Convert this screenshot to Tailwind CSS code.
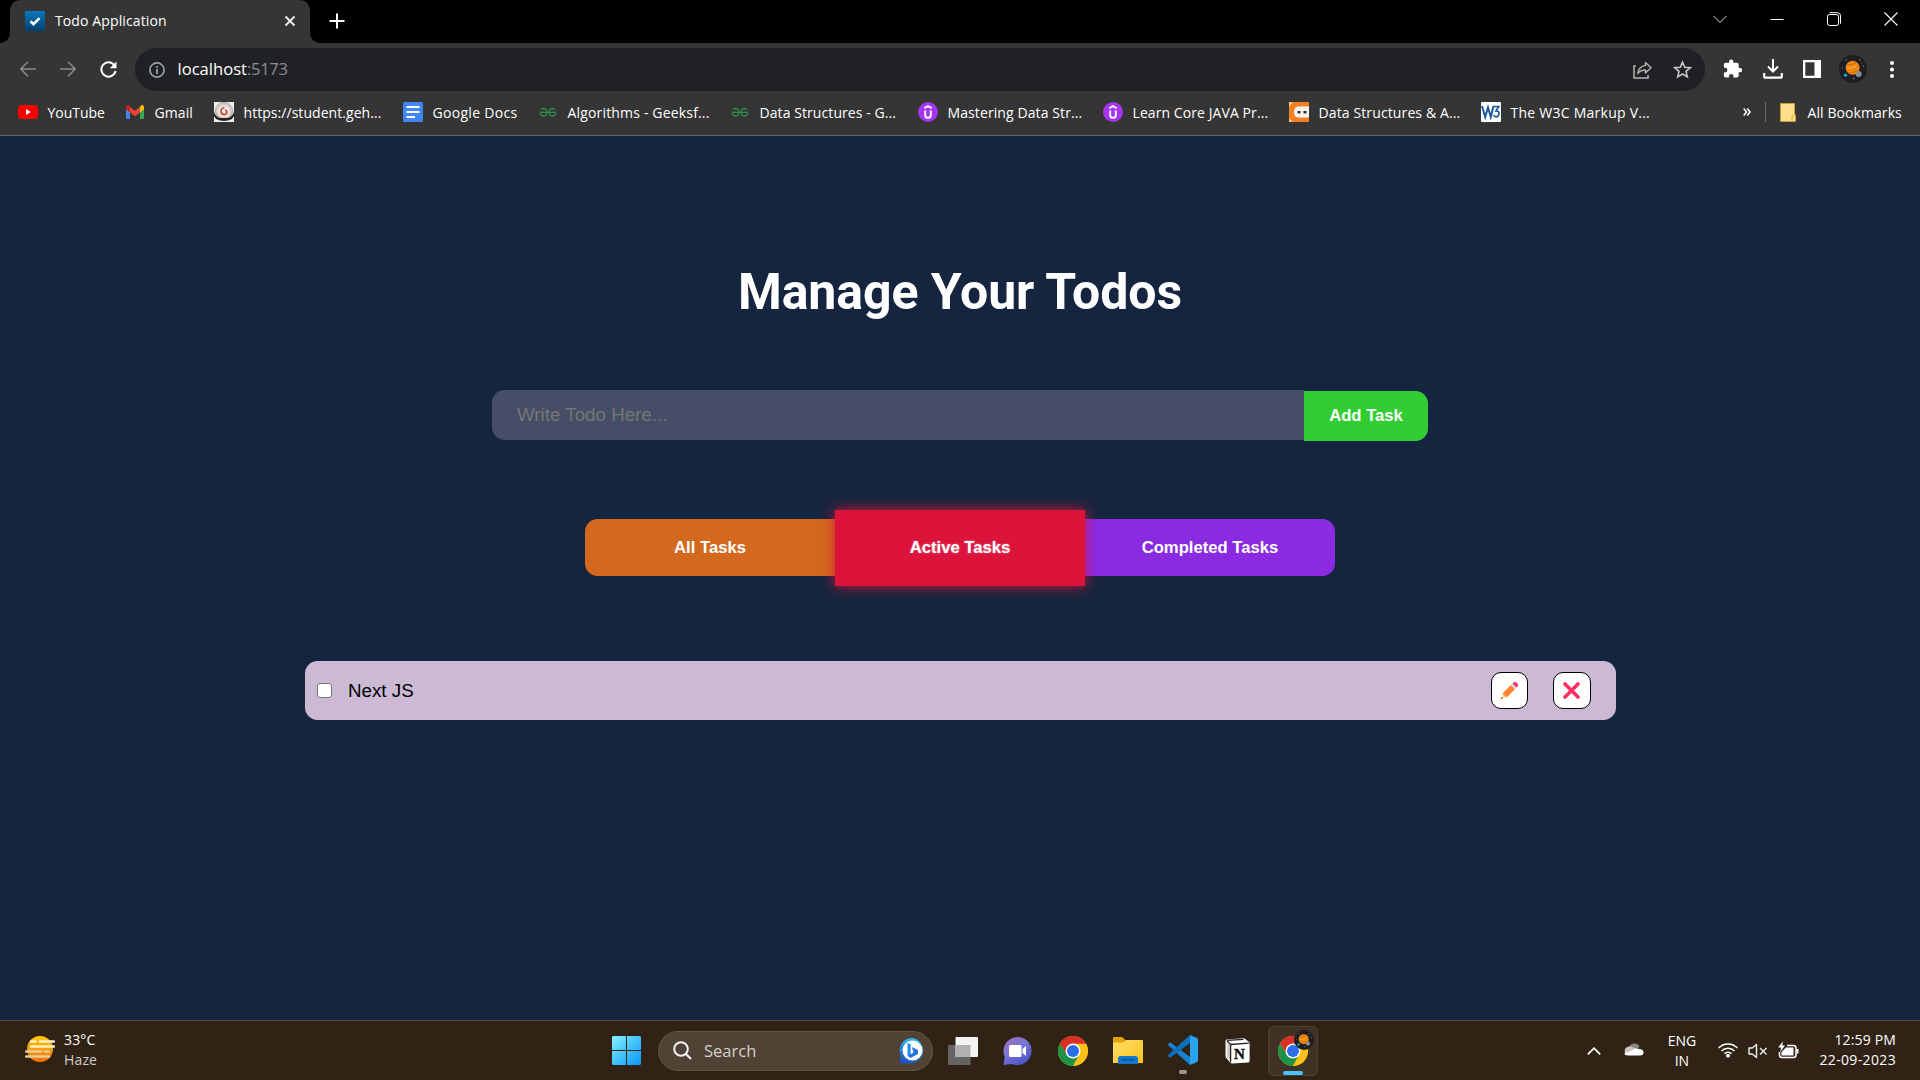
<!DOCTYPE html>
<html lang="en">
<head>
<meta charset="utf-8">
<title>Todo Application</title>
<script src="https://cdn.jsdelivr.net/npm/@tailwindcss/browser@4"></script>
</head>
<body class="w-[1920px] h-[1080px] overflow-hidden flex flex-col bg-[#16253f] text-white text-[14px] font-['Open_Sans','Noto_Sans',sans-serif]">

<svg class="hidden">
  <symbol id="chrome" viewBox="0 0 48 48">
    <circle cx="24" cy="24" r="24" fill="#fbc116"/>
    <path d="M24 24 44.8 12A24 24 0 0 0 3.2 12L13.6 30z" fill="#d93025"/>
    <path d="M24 13H45.3L44.8 12H24z" fill="#d93025"/>
    <path d="M3.2 12A24 24 0 0 0 24 48L33.8 30.5 24 24 13.8 29.5z" fill="#1e9245"/>
    <path d="M24 12.5H45A24 24 0 0 1 24 48L34.2 30z" fill="#fbc116"/>
    <circle cx="24" cy="24" r="12" fill="#fff"/>
    <circle cx="24" cy="24" r="9.6" fill="#2a6fe8"/>
  </symbol>
  <symbol id="planet" viewBox="0 0 28 28">
    <circle cx="14" cy="14" r="14" fill="#1d1e24"/>
    <circle cx="13.6" cy="12.8" r="7" fill="#f0860c"/>
    <path d="M8.500 9.500c3 .6 6-.4 8.500-2.200M9.500 17.700c3 .5 6-.3 8.500-2" stroke="#d0660f" stroke-width="1" fill="none"/>
    <path d="M8 13c3 .4 6-.2 9-1.600" stroke="#ffb54a" stroke-width="1" fill="none"/>
    <circle cx="19.600" cy="19" r="3" fill="#8b8f94"/>
    <circle cx="6.500" cy="20.200" r="1.800" fill="#19a3b5"/>
    <g fill="#8a8c92"><circle cx="7" cy="5" r=".7"/><circle cx="21" cy="5" r=".7"/><circle cx="24.500" cy="11" r=".7"/><circle cx="3.500" cy="13" r=".6"/><circle cx="14.500" cy="23.500" r=".8"/><circle cx="22.500" cy="8" r=".5"/></g>
  </symbol>
  <symbol id="udemy" viewBox="0 0 20 20">
    <circle cx="10" cy="10" r="10" fill="#a435f0"/>
    <path d="M6.300 6.200 10 4l3.700 2.200" stroke="#fff" stroke-width="1.700" fill="none"/>
    <path d="M7.200 8.500v4.700q0 2.600 2.800 2.600t2.800-2.600V8.500" stroke="#fff" stroke-width="1.900" fill="none"/>
  </symbol>
  <symbol id="gfg" viewBox="0 0 20 20">
    <path d="M3 7.600Q6.500 5.400 8.400 8 9.500 10.500 8.400 12.600 6.500 14.800 4 13.600 2.300 12.500 2.300 10.500M17 7.600Q13.500 5.400 11.600 8 10.500 10.500 11.600 12.600 13.500 14.800 16 13.600 17.700 12.500 17.700 10.500M1.800 10.400H18.200" stroke="#2f8d46" stroke-width="1.400" fill="none"/>
  </symbol>
</svg>

<!-- Tab strip -->
<header class="h-[43px] shrink-0 bg-black flex items-start justify-between">
  <div class="flex items-end">
    <div class="w-2.5 h-2.5 bg-[#353535]"><div class="size-full bg-black rounded-br-[10px]"></div></div>
    <div class="w-[300px] h-[43px] rounded-t-[10px] bg-[#353535] flex items-center pl-[15px] pr-[14px]">
      <svg class="size-5 mb-px" viewBox="0 0 20 20"><defs><linearGradient id="tg" x2="0" y2="1"><stop stop-color="#0a78bd"/><stop offset="1" stop-color="#01406f"/></linearGradient></defs><path fill="url(#tg)" d="M0 0h20v20H0z"/><path d="m5.500 10.200 3 2.900 6-6" fill="none" stroke="#fff" stroke-width="2.700"/></svg>
      <span class="ml-[10px] mb-[3px] tracking-[0.120px] grow">Todo Application</span>
      <svg class="size-3 mb-px" viewBox="0 0 12 12"><path d="m1.500 1.500 9 9m0-9-9 9" stroke="#f1f1f1" stroke-width="1.900"/></svg>
    </div>
    <div class="w-2.5 h-2.5 bg-[#353535]"><div class="size-full bg-black rounded-bl-[10px]"></div></div>
    <svg class="size-4 ml-[9px] mb-[14px]" viewBox="0 0 16 16"><path d="M8 .5v15M.5 8h15" stroke="#fff" stroke-width="2"/></svg>
  </div>
  <div class="flex items-center h-[37px] pr-[22px] gap-[43px]">
    <svg class="size-[14px]" viewBox="0 0 14 14"><path d="m.5 4 6.500 6.500L13.500 4" fill="none" stroke="#ddd" stroke-width="1"/></svg>
    <svg class="size-[14px]" viewBox="0 0 14 14"><path d="M.5 7.500h13" stroke="#fff" stroke-width="1"/></svg>
    <svg class="size-[14px]" viewBox="0 0 14 14"><rect x=".5" y="2.500" width="11" height="11" rx="2" fill="none" stroke="#fff"/><path d="M2.500.7h8q3 0 3 3v8" fill="none" stroke="#fff"/></svg>
    <svg class="size-[14px]" viewBox="0 0 14 14"><path d="m.5.500 13 13m0-13-13 13" stroke="#fff" stroke-width="1.100"/></svg>
  </div>
</header>

<!-- Toolbar -->
<div class="h-[53px] shrink-0 bg-[#353535] flex items-center">
  <div class="flex items-center w-[135px] pl-[19.500px] gap-6 pb-px">
    <svg class="size-4" viewBox="0 0 16 16"><path d="M16 8H1.500M8 .8.900 8 8 15.200" fill="none" stroke="#8b8b8b" stroke-width="1.600"/></svg>
    <svg class="size-4" viewBox="0 0 16 16"><path d="M0 8h14.500M8 .8 15.100 8 8 15.200" fill="none" stroke="#8b8b8b" stroke-width="1.600"/></svg>
    <svg class="size-[17px]" viewBox="0 0 18 18"><path d="M15.200 4.400A7.600 7.600 0 1 0 16.500 10.600" fill="none" stroke="#fff" stroke-width="2.100"/><path d="M17.500.600v7.200h-7.200z" fill="#fff"/></svg>
  </div>
  <div class="w-[1570px] h-[43px] rounded-full bg-[#202124] flex items-center pl-[14px] pr-[13px]">
    <svg class="size-4" viewBox="0 0 16 16"><circle cx="8" cy="8" r="7.100" fill="none" stroke="#9aa0a6" stroke-width="1.700"/><path d="M8 7v5M8 4v1.800" stroke="#9aa0a6" stroke-width="1.800"/></svg>
    <span class="ml-[12.500px] text-[16.600px] grow text-[#8b8e92]"><span class="text-white">localhost</span><span class="tracking-[-0.350px]">:5173</span></span>
    <svg class="w-[19px] h-[18px] mr-[21px]" viewBox="0 0 19 18"><path d="M3 5H1v12h14v-3" fill="none" stroke="#b5b5b5" stroke-width="1.500"/><path d="M12.500 1.500 18 6.700l-5.500 5.200V9Q7.500 9 4.800 12.500 5.500 5.500 12.500 4.400z" fill="none" stroke="#b5b5b5" stroke-width="1.400" stroke-linejoin="round"/></svg>
    <svg class="size-[19px]" viewBox="0 0 19 19"><path d="m9.500 2 2.200 5.200 5.600.5-4.300 3.700 1.300 5.500-4.800-2.900-4.800 2.900L6 11.400 1.700 7.700l5.600-.5z" fill="none" stroke="#c8c8c8" stroke-width="1.600"/></svg>
  </div>
  <div class="flex items-center ml-[18px] pb-px">
    <svg class="size-[19px] mb-px" viewBox="0 0 19 19"><path d="M17 9.100h-1.300V5.500q0-1.700-1.700-1.700h-3.700V2.600a2.100 2.100 0 0 0-4.200 0v1.200H2.500Q.9 3.800.9 5.500v3.300h1.200a2.300 2.300 0 0 1 0 4.600H.9v3.400q0 1.600 1.600 1.600h3.400v-1.200a2.300 2.300 0 0 1 4.600 0v1.200H14q1.700 0 1.700-1.600v-3.500H17a2.100 2.100 0 0 0 0-4.200z" fill="#fff"/></svg>
    <svg class="size-5 ml-[21px]" viewBox="0 0 20 20"><path d="M10 0v12M5 7.500l5 5 5-5" fill="none" stroke="#fff" stroke-width="2"/><path d="M1.200 14v3.200q0 1.500 1.500 1.500h14.600q1.500 0 1.500-1.500V14" fill="none" stroke="#fff" stroke-width="2.200"/></svg>
    <svg class="size-[18px] ml-5" viewBox="0 0 18 18"><path d="M0 0h18v18H0zM2.300 2.300v13.400h9.200V2.300z" fill="#fff" fill-rule="evenodd"/></svg>
    <svg class="size-7 ml-[18px]"><use href="#planet"/></svg>
    <svg class="w-1 h-[17px] ml-[23px]" viewBox="0 0 4 17"><g fill="#fff"><circle cx="2" cy="2" r="2"/><circle cx="2" cy="8.500" r="2"/><circle cx="2" cy="15" r="2"/></g></svg>
  </div>
</div>

<!-- Bookmarks bar -->
<nav class="h-10 shrink-0 bg-[#353535] border-b border-[#666] flex items-center pl-[18px] pb-[7px] whitespace-nowrap tracking-[0.080px]">
  <div class="w-[107px] flex items-center gap-[9.500px]">
    <svg class="size-5 shrink-0" viewBox="0 0 20 20"><rect y="3" width="20" height="14" rx="3.500" fill="#f00"/><path d="M8 7v6l5-3z" fill="#fff"/></svg><span class="tracking-[-0.020px]">YouTube</span></div>
  <div class="w-[89px] flex items-center gap-[9.500px]">
    <svg class="size-5 shrink-0" viewBox="0 0 20 20"><path d="M1 5v10.500q0 1.500 1.500 1.500H5V8z" fill="#4285f4"/><path d="M15 8v9h2.500q1.500 0 1.500-1.500V5z" fill="#34a853"/><path d="M5 5v5.500l5 3.800 5-3.800V5l-5 3.800z" fill="#ea4335"/><path d="M15 5v5.500l4-3V5.200Q19 3 17 3q-1 0-2 2z" fill="#fbbc04"/><path d="M5 5v5.500l-4-3V5.200Q1 3 3 3q1 0 2 2z" fill="#c5221f"/></svg><span>Gmail</span></div>
  <div class="w-[189px] flex items-center gap-[9.500px]">
    <svg class="size-5 shrink-0" viewBox="0 0 20 20"><path d="M0 0h20v20H0z" fill="#f1efec"/><circle cx="10" cy="9" r="8.500" fill="#d9cfcb" stroke="#aaa09b"/><path d="M0 10q2 5 6 6h8q4-1 6-6v4l-2 3q-8 4-16 0l-2-3z" fill="#25221f"/><circle cx="10" cy="9.500" r="5.500" fill="#f4f0ee"/><path d="M10.500 5.500Q6.500 6.500 7 10q.8 2.800 3.500 2.600 2.500-.4 2.400-2.600-.5-2-2-1.600" fill="none" stroke="#c8442d" stroke-width="1.700"/></svg><span class="tracking-[0.050px]">https://student.geh...</span></div>
  <div class="w-[135px] flex items-center gap-[9.500px]">
    <svg class="size-5 shrink-0" viewBox="0 0 20 20"><rect width="20" height="20" rx="1.500" fill="#4285f4"/><path d="M3.500 5h13M3.500 10h13M3.500 15h8.500" stroke="#fff" stroke-width="2.200"/></svg><span class="tracking-[0.300px]">Google Docs</span></div>
  <div class="w-[192px] flex items-center gap-[9.500px]">
    <svg class="size-5 shrink-0"><use href="#gfg"/></svg><span class="tracking-[0.170px]">Algorithms - Geeksf...</span></div>
  <div class="w-[188px] flex items-center gap-[9.500px]">
    <svg class="size-5 shrink-0"><use href="#gfg"/></svg><span>Data Structures - G...</span></div>
  <div class="w-[185px] flex items-center gap-[9.500px]">
    <svg class="size-5 shrink-0"><use href="#udemy"/></svg><span class="tracking-[0.100px]">Mastering Data Str...</span></div>
  <div class="w-[186px] flex items-center gap-[9.500px]">
    <svg class="size-5 shrink-0"><use href="#udemy"/></svg><span>Learn Core JAVA Pr...</span></div>
  <div class="w-[192px] flex items-center gap-[9.500px]">
    <svg class="size-5 shrink-0" viewBox="0 0 20 20"><path d="M0 0h20v20H0z" fill="#f48024"/><path d="M20 4.500H9Q5 5 5 10t4 5.500h11z" fill="#f7f3ee"/><path d="M8.500 9h3v2.500h-3zM14.500 9h3v2.500h-3z" fill="#333"/><path d="M0 0h4L0 5zM0 20h4l-4-4z" fill="#ffc48a"/></svg><span class="tracking-[0.120px]">Data Structures &amp; A...</span></div>
  <div class="w-[262px] flex items-center gap-[9.500px]">
    <svg class="size-5 shrink-0" viewBox="0 0 20 20"><rect width="20" height="20" rx="1" fill="#fff"/><path d="m1 4 3.200 11L7 5.500 9.800 15 12.500 4" fill="none" stroke="#1a5a9c" stroke-width="2"/><path d="M12.500 4.500h5.300L15 8.800q3.300 0 3 3-.600 3-3 3-1.700 0-2.500-1.800" fill="none" stroke="#1a5a9c" stroke-width="1.700"/></svg><span class="tracking-[0.250px]">The W3C Markup V...</span></div>
  <svg class="w-2 h-2" viewBox="0 0 8 8"><path d="m.7.500 2.800 3.500L.7 7.500m3.500-7L7 4 4.200 7.500" fill="none" stroke="#fff" stroke-width="1.500"/></svg>
  <div class="w-px h-5 bg-[#6c6c6c] ml-[14px] mr-[14px]"></div>
  <svg class="w-4 h-5" viewBox="0 0 16 20"><path d="M.5 1.500h14v11.200h1v6.800H.5z" fill="#ffe08a" stroke="#c9a136"/><path d="M12 19v-5h2.500" fill="none" stroke="#d9ac33"/></svg>
  <span class="ml-[11.500px]">All Bookmarks</span>
</nav>

<!-- Page -->
<main class="grow flex flex-col items-center font-['Liberation_Sans',Arial,sans-serif]">
  <h1 class="mt-[126px] h-[60px] leading-[60px] text-[50px] font-bold font-[Roboto,sans-serif] tracking-[-0.080px]">Manage Your Todos</h1>
  <form class="mt-[68px] flex">
    <input type="text" placeholder="Write Todo Here..." class="w-[812px] h-[50px] rounded-l-[12.500px] bg-[#454e66] pl-[25px] text-[18.750px] placeholder:text-[#757575] outline-none">
    <button type="button" class="mt-px w-[124px] h-[50px] pb-0.5 rounded-r-[12.500px] bg-[#32cd32] text-[16.670px] font-bold">Add Task</button>
  </form>
  <div class="mt-[69px] h-[76px] flex items-start text-[16.670px] font-bold">
    <button class="mt-[9px] w-[250px] h-[57px] pb-px rounded-l-[12.500px] bg-[#d2691e]">All Tasks</button>
    <button class="w-[250px] h-[76px] pb-0.5 bg-[#dc143c] relative shadow-[0_0_12.500px_#dc143c] [text-shadow:0_0_2px_rgba(255,255,255,0.5)]">Active Tasks</button>
    <button class="mt-[9px] w-[250px] h-[57px] pb-px rounded-r-[12.500px] bg-[#8a2be2]">Completed Tasks</button>
  </div>
  <div class="mt-[75px] w-[1311px] h-[59px] rounded-[12.500px] bg-[#ccbad5] flex items-center pl-3 pr-[25px] text-[18.750px] text-black">
    <div class="size-[15px] mb-px rounded-[3px] bg-white border border-[#767676]"></div>
    <span class="ml-[16.500px] mt-px grow">Next JS</span>
    <button class="size-[37px] rounded-[10px] border border-black bg-white flex items-center justify-center">
      <svg class="size-[19px]" viewBox="0 0 19 19"><path d="m1.500 17.500 1.300-4.800 3.500 3.500z" fill="#ffdb8a"/><path d="m.9 18.100.6-2 1.400 1.400z" fill="#444"/><path d="M2.500 12.400 10.800 4.100l4.100 4.100-8.300 8.300z" fill="#ff822d"/><path d="m10.800 4.100 1.600-1.600 4.100 4.100-1.600 1.600z" fill="#cdd6e0"/><path d="M12.500 2.500 14 1.200q1-.9 2 .1L17.700 3q1 1 .1 2l-1.300 1.600z" fill="#f92f60"/></svg>
    </button>
    <button class="w-[38px] h-[37px] ml-[25px] rounded-[10px] border border-black bg-white flex items-center justify-center">
      <svg class="size-[17px]" viewBox="0 0 17 17"><path d="m2 2 13 13m0-13L2 15" stroke="#f92f60" stroke-width="3.600" stroke-linecap="round"/></svg>
    </button>
  </div>
</main>

<!-- Taskbar -->
<footer class="h-[60px] shrink-0 bg-[#302316] border-t border-[#51453d] flex items-center">
  <div class="w-[612px] flex items-center pl-[25px] gap-[9px]">
    <svg class="w-[30px] h-[26px] mb-1" viewBox="0 0 30 26"><defs><linearGradient id="sun" x2="0" y2="1"><stop stop-color="#ffcf0a"/><stop offset="1" stop-color="#ef6c0b"/></linearGradient></defs><circle cx="15" cy="13" r="13" fill="url(#sun)"/><path d="M6 5.500h4.500M15 5.500h14M6 10.500h23" stroke="#fff0c4" stroke-width="2.500" stroke-linecap="round"/><path d="M1.200 15.500h15M20 15.500h4M1.200 20.500h23" stroke="#e8cb96" stroke-width="2.500" stroke-linecap="round"/></svg>
    <div class="leading-5 tracking-[0.150px] mb-px"><div>33°C</div><div class="text-[#cfcbc7]">Haze</div></div>
  </div>
  <svg class="size-[29px]" viewBox="0 0 29 29"><defs><linearGradient id="win" x2="1" y2="1"><stop stop-color="#83f2ff"/><stop offset="1" stop-color="#0795fa"/></linearGradient></defs><path d="M1 0h13v14H0V1zM15 0h13l1 1v13H15zM0 15h14v14H1l-1-1zM15 15h14v13l-1 1H15z" fill="url(#win)"/></svg>
  <div class="ml-[17px] w-[275px] h-10 rounded-full bg-[#504336] border border-[#62564a] flex items-center pl-[14px] pr-[7px]">
    <svg class="size-[19px]" viewBox="0 0 19 19"><circle cx="8" cy="8" r="6.800" fill="none" stroke="#f3f3f3" stroke-width="2"/><path d="m13 13 5 5" stroke="#f3f3f3" stroke-width="2.200"/></svg>
    <span class="ml-[12px] mt-px grow text-[16.500px] text-[#d4d0cc]">Search</span>
    <svg class="size-[26px]" viewBox="0 0 26 26"><defs><linearGradient id="bing" x1=".6" x2=".3" y2="1"><stop stop-color="#2fc3ee"/><stop offset="1" stop-color="#1d53c4"/></linearGradient></defs><path d="M13.500 0A12.500 12.500 0 1 1 9 25.200L.8 25.500l.8-8A12.500 12.500 0 0 1 13.500 0z" fill="url(#bing)"/><circle cx="13.500" cy="12.500" r="10" fill="#fff"/><path d="m8.500 5 3.200 1.200v10.300L8.500 18z" fill="#2a8bea"/><path d="m12.800 9 6.200 3v4L11.500 20l-3-2.200 6-3.200z" fill="#2476e0"/></svg>
  </div>
  <div class="flex items-center h-full ml-[2px]">
    <div class="w-[55px] flex justify-center"><svg class="w-[30px] h-[28px]" viewBox="0 0 30 28"><rect y="8" width="22.500" height="20" rx="1" fill="#646464"/><rect x="7.500" width="22.500" height="20" rx="1" fill="#f3f3f3"/><path d="M7.500 8h15v12h-15z" fill="#b3b1af"/></svg></div>
    <div class="w-[55px] flex justify-center"><svg class="w-[29px] h-[28px]" viewBox="0 0 29 28"><defs><linearGradient id="chat" x2=".6" y2="1"><stop stop-color="#a167bc"/><stop offset=".5" stop-color="#7a78d8"/><stop offset="1" stop-color="#4f55c8"/></linearGradient></defs><path d="M14.500 0a14 14 0 0 1 0 28Q11 28 8 27L.5 28l1.300-8A14 14 0 0 1 14.500 0z" fill="url(#chat)"/><rect x="6" y="8" width="12.500" height="12" rx="1.500" fill="#fff"/><path d="m19.500 12 3.500-3v10l-3.500-3z" fill="#fff"/></svg></div>
    <div class="w-[55px] flex justify-center"><svg class="size-[30px]"><use href="#chrome"/></svg></div>
    <div class="w-[55px] flex justify-center"><svg class="w-[30px] h-[27px]" viewBox="0 0 30 27"><defs><linearGradient id="fold" x2="1" y2="1"><stop stop-color="#ffe06a"/><stop offset="1" stop-color="#fbc21d"/></linearGradient></defs><path d="M0 1q0-1 1-1h8l4 3.500L10 7H0z" fill="#e0a208"/><path d="M0 5.500h10.500L13 3h16q1 0 1 1v22H0z" fill="url(#fold)"/><path d="M5 27v-5.500q0-2.500 2.500-2.500h15q2.500 0 2.500 2.500V27z" fill="#1577c9"/><path d="M8.500 22.800h13" stroke="#0b4f94" stroke-width="1.300"/></svg></div>
    <div class="w-[55px] h-full flex flex-col items-center pt-[14px]"><svg class="size-[30px]" viewBox="0 0 30 30"><path d="m2.200 7.200-1.800 1.500q-.8 1 0 1.800L22 30v-8z" fill="#1583d0"/><path d="m2.200 22.800-1.800-1.500q-.8-1 0-1.800L22 0v8z" fill="#0a6ebd"/><path d="M22 0 28.500 2.800q1.500.7 1.500 2v20.400q0 1.300-1.500 2L22 30z" fill="#27a3f2"/></svg><div class="mt-[5px] w-2 h-1 rounded-full bg-[#9e9792]"></div></div>
    <div class="w-[55px] flex justify-center"><svg class="w-[25px] h-[26px]" viewBox="0 0 25 26"><path d="M1.500 1.500 18.500.3q1 0 1.800.6L24 4q.6.500.6 1.400V23q0 1.300-1.300 1.400L7 25.500q-1.200 0-1.900-.9L1.200 20Q.5 19 .5 18V3q0-1.300 1-1.500z" fill="#fff"/><path d="M2.200 3.800 5 7v16L2 19.300z" fill="#cfccc9"/><path d="M1.800 2.600 5.600 6.500V24.500M5.600 6.500 24 5.200M2.500 2.300 18.500 1.300" fill="none" stroke="#26221f" stroke-width="1.300"/><text x="9" y="21" class="font-['Liberation_Serif',serif] text-[15px] font-bold" fill="#111" stroke="#111" stroke-width=".4">N</text></svg></div>
    <div class="w-[55px] flex justify-center"><div class="w-[50px] h-[50px] rounded-[5px] bg-[#403326] border border-[#4b3f32] flex flex-col items-center pt-[9px] relative"><svg class="size-[30px]"><use href="#chrome"/></svg><svg class="absolute left-[25px] top-[3px] size-[20px]"><use href="#planet"/></svg><div class="mt-[5px] w-5 h-1 rounded-full bg-[#4cc2ff]"></div></div></div>
  </div>
  <div class="grow flex items-center justify-end pr-[24px]">
    <svg class="w-[14px] h-2" viewBox="0 0 14 8"><path d="m.8 7.300L7 1.200l6.200 6.100" fill="none" stroke="#fff" stroke-width="1.700"/></svg>
    <svg class="w-5 h-[14px] ml-[23px] mb-1" viewBox="0 0 20 14"><path d="M5 6a5.500 5.500 0 0 1 10.500-1L10 8z" fill="#8d8680"/><path d="M1 11Q-.5 5.500 5 4.500q3-.5 6 2L8 11z" fill="#c9c5c2"/><path d="M4 13.500q-3.500 0-3.500-2.500 3.500 0 8-3 3-3 6.500-1 4.500 0 4.500 3.500 0 3-3.500 3z" fill="#fff"/></svg>
    <div class="ml-[23px] w-[29px] text-center leading-5 mt-px"><div>ENG</div><div>IN</div></div>
    <svg class="w-5 h-4 ml-[22px] mb-0.5" viewBox="0 0 20 16"><g fill="none" stroke="#fff" stroke-width="1.500"><path d="M.6 6a13 13 0 0 1 18.800 0M3.500 9a9 9 0 0 1 13 0M6.400 11.800a5 5 0 0 1 7.200 0"/></g><circle cx="10" cy="13.700" r="1.900" fill="#fff"/></svg>
    <svg class="w-5 h-4 ml-[10px]" viewBox="0 0 20 16"><path d="M1 5h3.200L8.500 1.500v13L4.200 11H1z" fill="none" stroke="#eee" stroke-width="1.400" stroke-linejoin="round"/><path d="m12 5 6.500 6.500m0-6.500L12 11.500" stroke="#eee" stroke-width="1.400"/></svg>
    <svg class="w-[21px] h-[18px] ml-[10px] mb-0.5" viewBox="0 0 21 18"><path d="M9 4.500h6.500q2.500 0 2.500 2.500v7q0 2.500-2.500 2.500H4Q1.500 16.500 1.500 14v-3" fill="none" stroke="#fff" stroke-width="1.500"/><path d="M8 6.500h7.500v8h-12V11z" fill="#fff"/><path d="M18.500 8h2v4.500h-2z" fill="#fff"/><path d="M5 .2.200 6.600h3L2 11.200l5-6.700H4.200z" fill="#fff"/></svg>
    <div class="ml-[20px] text-right leading-5 mb-px"><div class="tracking-[0.150px]">12:59 PM</div><div class="tracking-[0.350px]">22-09-2023</div></div>
  </div>
</footer>
</body>
</html>
